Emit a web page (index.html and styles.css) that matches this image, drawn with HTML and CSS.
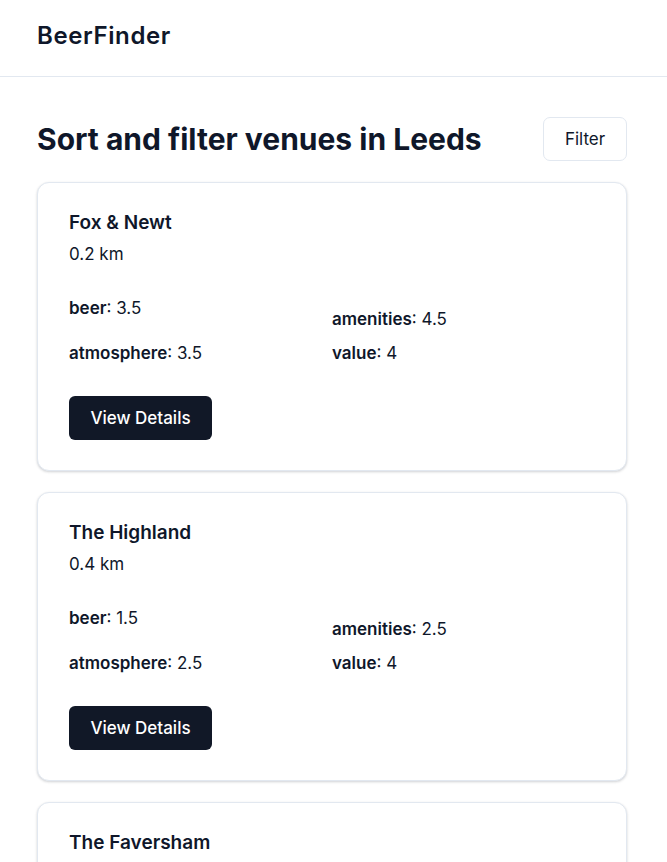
FILE: index.html
```html
<!DOCTYPE html>
<html lang="en">
<head>
<meta charset="utf-8">
<title>BeerFinder</title>
<link rel="stylesheet" href="styles.css">
</head>
<body>
<header class="site-header">
  <div class="brand">BeerFinder</div>
</header>
<main class="main">
  <div class="page-head">
    <h1 class="page-title">Sort and filter venues in Leeds</h1>
    <button class="btn-outline">Filter</button>
  </div>
  <div class="venue-list">
    <article class="card">
      <h2 class="venue-name">Fox &amp; Newt</h2>
      <p class="distance">0.2 km</p>
      <div class="ratings">
        <div class="rating"><strong>beer</strong>: 3.5</div>
        <div class="rating rating-offset"><strong>amenities</strong>: 4.5</div>
        <div class="rating"><strong>atmosphere</strong>: 3.5</div>
        <div class="rating"><strong>value</strong>: 4</div>
      </div>
      <button class="btn-primary">View Details</button>
    </article>
    <article class="card">
      <h2 class="venue-name">The Highland</h2>
      <p class="distance">0.4 km</p>
      <div class="ratings">
        <div class="rating"><strong>beer</strong>: 1.5</div>
        <div class="rating rating-offset"><strong>amenities</strong>: 2.5</div>
        <div class="rating"><strong>atmosphere</strong>: 2.5</div>
        <div class="rating"><strong>value</strong>: 4</div>
      </div>
      <button class="btn-primary">View Details</button>
    </article>
    <article class="card">
      <h2 class="venue-name">The Faversham</h2>
      <p class="distance">0.5 km</p>
      <div class="ratings">
        <div class="rating"><strong>beer</strong>: 3</div>
        <div class="rating rating-offset"><strong>amenities</strong>: 3.5</div>
        <div class="rating"><strong>atmosphere</strong>: 4</div>
        <div class="rating"><strong>value</strong>: 3.5</div>
      </div>
      <button class="btn-primary">View Details</button>
    </article>
  </div>
</main>
</body>
</html>
```

FILE: styles.css
```css
* {
  box-sizing: border-box;
}

html, body {
  margin: 0;
  padding: 0;
  background: #ffffff;
}

body {
  font-family: Inter, "Liberation Sans", sans-serif;
  color: #0f172a;
  font-size: 17px;
  line-height: 24px;
}

.site-header {
  padding: 22px 37px 26px;
  border-bottom: 1px solid #e2e8f0;
}

.brand {
  font-size: 24px;
  line-height: 28px;
  font-weight: 600;
  letter-spacing: 0.6px;
}

.main {
  padding: 40px 40px 40px 37px;
}

.page-head {
  display: flex;
  align-items: center;
  justify-content: space-between;
  margin-bottom: 21px;
}

.page-title {
  margin: 0;
  font-size: 30px;
  line-height: 36px;
  font-weight: 700;
}

.btn-outline {
  font-family: inherit;
  font-size: 17px;
  font-weight: 400;
  color: #0f172a;
  background: #ffffff;
  border: 1px solid #e2e8f0;
  border-radius: 7px;
  height: 44px;
  width: 84px;
  padding: 0;
}

.venue-list {
  display: flex;
  flex-direction: column;
  gap: 21px;
}

.card {
  border: 1px solid #e2e8f0;
  border-radius: 12px;
  background: #ffffff;
  box-shadow: 0 1px 3px rgba(15, 23, 42, 0.12), 0 1px 2px rgba(15, 23, 42, 0.08);
  padding: 26px 31px 30px;
}

.venue-name {
  margin: 0;
  font-size: 19px;
  line-height: 28px;
  font-weight: 600;
}

.distance {
  margin: 5px 0 0;
  font-size: 17px;
  line-height: 24px;
}

.ratings {
  display: grid;
  grid-template-columns: 1fr 1fr;
  row-gap: 10px;
  margin-top: 30px;
  align-items: start;
}

.rating {
  font-size: 17px;
  line-height: 24px;
}

.rating strong {
  font-weight: 600;
}

.rating-offset {
  margin-top: 11px;
}

.btn-primary {
  display: block;
  margin-top: 31px;
  font-family: inherit;
  font-size: 17px;
  font-weight: 500;
  color: #ffffff;
  background: #111827;
  border: none;
  border-radius: 6px;
  height: 44px;
  width: 143px;
  padding: 0;
}
```
